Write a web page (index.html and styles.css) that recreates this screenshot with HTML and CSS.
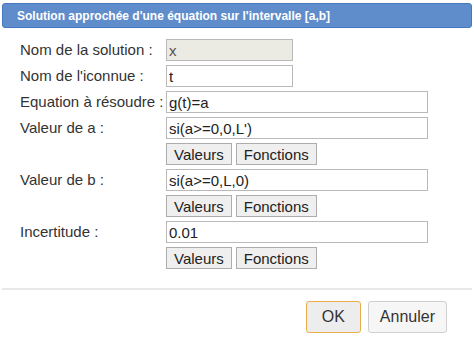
FILE: index.html
```html
<!DOCTYPE html>
<html lang="fr">
<head>
    <meta charset="UTF-8">
    <title>Solution approchée</title>
    <link rel="stylesheet" href="styles.css">
</head>
<body>
    <div class="dialog">
        <div class="title-bar">Solution approchée d'une équation sur l'intervalle [a,b]</div>

        <div class="form-grid">
            <label>Nom de la solution :</label>
            <div><input class="field short readonly" type="text" value="x" readonly></div>

            <label>Nom de l'iconnue :</label>
            <div><input class="field short" type="text" value="t"></div>

            <label>Equation à résoudre :</label>
            <div><input class="field" type="text" value="g(t)=a"></div>

            <label>Valeur de a :</label>
            <div><input class="field" type="text" value="si(a&gt;=0,0,L')"></div>
            <span></span>
            <div class="btn-row"><button class="small-btn">Valeurs</button><button class="small-btn">Fonctions</button></div>

            <label>Valeur de b :</label>
            <div><input class="field" type="text" value="si(a&gt;=0,L,0)"></div>
            <span></span>
            <div class="btn-row"><button class="small-btn">Valeurs</button><button class="small-btn">Fonctions</button></div>

            <label>Incertitude :</label>
            <div><input class="field" type="text" value="0.01"></div>
            <span></span>
            <div class="btn-row"><button class="small-btn">Valeurs</button><button class="small-btn">Fonctions</button></div>
        </div>

        <div class="footer">
            <button class="dlg-btn ok">OK</button>
            <button class="dlg-btn">Annuler</button>
        </div>
    </div>
</body>
</html>
```

FILE: styles.css
```css
body {
    margin: 0;
    font-family: "Liberation Sans", Arial, sans-serif;
    background-color: #fff;
    color: #333;
}

.dialog {
    width: 474px;
    height: 351px;
    padding-top: 3px;
    box-sizing: border-box;
}

.title-bar {
    margin: 0 2px;
    height: 25px;
    line-height: 24px;
    box-sizing: border-box;
    padding-left: 14px;
    background-color: #5f8dcc;
    border: 1px solid #4677c2;
    border-radius: 3px;
    color: #fff;
    font-weight: bold;
    font-size: 12px;
}

.form-grid {
    display: grid;
    grid-template-columns: 146px 262px;
    row-gap: 4px;
    padding: 11px 0 0 20px;
}

.form-grid label {
    font-size: 15px;
    line-height: 22px;
    color: #333;
    white-space: nowrap;
}

.field {
    display: block;
    width: 262px;
    height: 22px;
    box-sizing: border-box;
    margin: 0;
    padding: 0 2px;
    border: 1px solid #b9b9b9;
    font-family: "Liberation Sans", Arial, sans-serif;
    font-size: 15px;
    color: #222;
    background: #fff;
}

.field.short {
    width: 127px;
}

.field.readonly {
    background-color: #ebebe4;
    color: #555;
}

.btn-row {
    display: flex;
    gap: 4px;
}

.small-btn {
    height: 22px;
    margin: 0;
    padding: 0 7px;
    border: 1px solid #adadad;
    background-color: #efefef;
    font-family: "Liberation Sans", Arial, sans-serif;
    font-size: 15px;
    color: #222;
}

.footer {
    margin-top: 19px;
    border-top: 2px solid #e8e8e8;
    margin-left: 2px;
    margin-right: 2px;
    display: flex;
    justify-content: flex-end;
    gap: 7px;
    padding: 11px 25px 0 0;
}

.dlg-btn {
    height: 32px;
    padding: 0 11px;
    border: 1px solid #cfcfcf;
    border-radius: 3px;
    background-color: #f6f6f6;
    font-family: "Liberation Sans", Arial, sans-serif;
    font-size: 16px;
    color: #333;
}

.dlg-btn.ok {
    width: 55px;
    border-color: #e9ad4c;
    background-color: #ededed;
}
```
